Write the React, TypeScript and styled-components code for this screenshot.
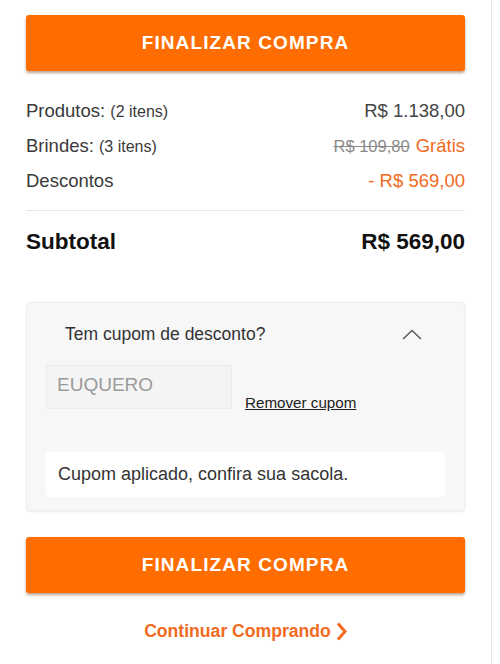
import React from "react";
import styled, { createGlobalStyle } from "styled-components";

const GlobalStyle = createGlobalStyle`
    html, body {
        margin: 0;
        padding: 0;
        background: #ffffff;
    }
    body {
        font-family: "Liberation Sans", Arial, sans-serif;
        color: #333333;
    }
`;

const Frame = styled.div`
    width: 492px;
    min-height: 664px;
    border-right: 1px solid #e9e9e9;
    box-sizing: border-box;
`;

const Page = styled.main`
    padding: 15px 26px 0 26px;
    display: flex;
    flex-direction: column;
`;

const OrangeButton = styled.button`
    width: 100%;
    height: 56px;
    border: none;
    border-radius: 3px;
    background: #ff6d00;
    color: #ffffff;
    font-family: "Liberation Sans", Arial, sans-serif;
    font-size: 19px;
    font-weight: 700;
    letter-spacing: 1.1px;
    box-shadow: 0 2px 3px rgba(120, 50, 0, 0.45);
    cursor: pointer;
`;

const Summary = styled.section`
    margin-top: 22px;
    display: flex;
    flex-direction: column;
`;

const Row = styled.div`
    display: flex;
    justify-content: space-between;
    align-items: center;
    height: 35px;
    font-size: 18.5px;
`;

const Label = styled.span`
    color: #3a3a3a;
`;

const Count = styled.span`
    font-size: 16px;
`;

const Value = styled.span<{ $orange?: boolean }>`
    color: ${(p) => (p.$orange ? "#f26a21" : "#444444")};
`;

const Strike = styled.span`
    color: #8a8a8a;
    font-size: 16.5px;
    text-decoration: line-through;
    margin-right: 6px;
`;

const Divider = styled.hr`
    border: none;
    border-top: 1px solid #e6e6e6;
    margin: 12px 0 0;
`;

const TotalRow = styled.div`
    display: flex;
    justify-content: space-between;
    align-items: center;
    height: 40px;
    margin-top: 11px;
    font-size: 22.5px;
    font-weight: 700;
    color: #111111;
`;

const CouponBox = styled.section`
    margin-top: 40px;
    background: #f7f7f7;
    border: 1px solid #eeeeee;
    border-radius: 4px;
    box-shadow: 0 1px 2px rgba(0, 0, 0, 0.08);
    padding: 19px 19px 13px;
    display: flex;
    flex-direction: column;
`;

const CouponHeader = styled.div`
    display: flex;
    justify-content: space-between;
    align-items: center;
    height: 24px;
    padding: 0 23px 0 19px;
    font-size: 17.5px;
    color: #333333;
`;

const CouponForm = styled.div`
    display: flex;
    align-items: flex-end;
    gap: 13px;
    margin-top: 19px;
`;

const CouponInput = styled.input`
    width: 186px;
    height: 44px;
    box-sizing: border-box;
    padding: 0 10px 4px;
    background: #f4f4f4;
    border: 1px solid #ebebeb;
    border-radius: 2px;
    font-family: "Liberation Sans", Arial, sans-serif;
    font-size: 19px;
    color: #9a9a9a;
    outline: none;
    &::placeholder {
        color: #9a9a9a;
    }
`;

const RemoveLink = styled.a`
    font-size: 15.2px;
    color: #222222;
    text-decoration: underline;
    margin-bottom: -2px;
    cursor: pointer;
`;

const Message = styled.div`
    margin-top: 43px;
    height: 45px;
    display: flex;
    align-items: center;
    padding: 0 12px;
    background: #ffffff;
    border-radius: 3px;
    font-size: 18px;
    color: #333333;
`;

const BottomButton = styled(OrangeButton)`
    margin-top: 26px;
`;

const ContinueLink = styled.a`
    margin-top: 28px;
    align-self: center;
    display: flex;
    align-items: center;
    gap: 5px;
    color: #f26a21;
    font-size: 17.6px;
    font-weight: 700;
    cursor: pointer;
`;

function ChevronUp() {
    return (
        <svg width="20" height="11" viewBox="0 0 20 11" fill="none">
            <path d="M1 10 L10 1.5 L19 10" stroke="#555555" strokeWidth="1.4" />
        </svg>
    );
}

function ChevronRight() {
    return (
        <svg width="11" height="19" viewBox="0 0 11 19" fill="none">
            <path d="M2 1.5 L9 9.5 L2 17.5" stroke="#f26a21" strokeWidth="3" />
        </svg>
    );
}

export default function App() {
    return (
        <>
            <GlobalStyle />
            <Frame>
                <Page>
                    <OrangeButton>FINALIZAR COMPRA</OrangeButton>
                    <Summary>
                        <Row>
                            <Label>
                                Produtos: <Count>(2 itens)</Count>
                            </Label>
                            <Value>R$ 1.138,00</Value>
                        </Row>
                        <Row>
                            <Label>
                                Brindes: <Count>(3 itens)</Count>
                            </Label>
                            <span>
                                <Strike>R$ 109,80</Strike>
                                <Value $orange>Grátis</Value>
                            </span>
                        </Row>
                        <Row>
                            <Label>Descontos</Label>
                            <Value $orange>- R$ 569,00</Value>
                        </Row>
                    </Summary>
                    <Divider />
                    <TotalRow>
                        <span>Subtotal</span>
                        <span>R$ 569,00</span>
                    </TotalRow>
                    <CouponBox>
                        <CouponHeader>
                            <span>Tem cupom de desconto?</span>
                            <ChevronUp />
                        </CouponHeader>
                        <CouponForm>
                            <CouponInput placeholder="EUQUERO" />
                            <RemoveLink>Remover cupom</RemoveLink>
                        </CouponForm>
                        <Message>Cupom aplicado, confira sua sacola.</Message>
                    </CouponBox>
                    <BottomButton>FINALIZAR COMPRA</BottomButton>
                    <ContinueLink>
                        Continuar Comprando
                        <ChevronRight />
                    </ContinueLink>
                </Page>
            </Frame>
        </>
    );
}
